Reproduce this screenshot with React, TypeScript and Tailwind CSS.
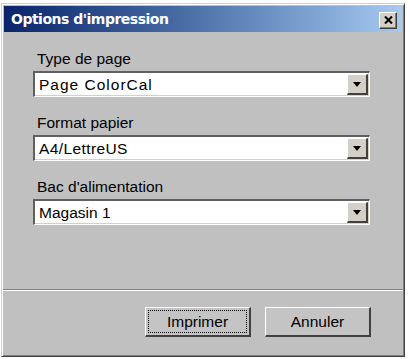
import React from "react";

const font = { fontFamily: '"Liberation Sans", Arial, sans-serif' };

function Select({ value, track }: { value: string; track: string }) {
  return (
    <div className="flex h-[26px] w-[337px] border-t-2 border-l-2 border-b border-r border-t-[#606060] border-l-[#606060] border-b-white border-r-white bg-white shadow-[inset_-1px_-1px_#d4d0c8]">
      <div className={"flex flex-1 items-center pl-[4px] text-[15.5px] text-black " + track} style={font}>
        {value}
      </div>
      <div className="m-[1px] flex w-[21px] items-center justify-center border-t border-l border-t-white border-l-white border-b-2 border-r-2 border-b-[#404040] border-r-[#404040] bg-[#d4d0c8]">
        <svg width="8" height="5" viewBox="0 0 8 5">
          <path d="M0 0h8L4 5z" fill="#000" />
        </svg>
      </div>
    </div>
  );
}

function Field({ label, value, track }: { label: string; value: string; track: string }) {
  return (
    <div className="flex flex-col">
      <div className="h-[18px] pl-[4px] text-[15.5px] leading-[18px] text-black" style={font}>
        {label}
      </div>
      <div className="mt-[3px]">
        <Select value={value} track={track} />
      </div>
    </div>
  );
}

function Button({ label, focused }: { label: string; focused?: boolean }) {
  return (
    <div className="flex h-[30px] w-[106px] border-t border-l border-t-white border-l-white border-b-2 border-r-2 border-b-[#404040] border-r-[#404040] bg-[#c4c4c4] p-[2px]">
      <div
        className={
          focused
            ? "flex flex-1 items-center justify-center border border-dotted border-black text-[15.5px] text-black"
            : "flex flex-1 items-center justify-center text-[15.5px] text-black"
        }
        style={font}
      >
        {label}
      </div>
    </div>
  );
}

export default function App() {
  return (
    <div className="h-[359px] w-[410px] bg-white pl-[1px] pt-[3px]">
      <div className="flex h-[354px] w-[404px] flex-col border border-[#d4d0c8] border-b-[#404040] border-r-[#404040] bg-[#c0c0c0] shadow-[inset_1px_1px_#ffffff,inset_-1px_-1px_#808080]">
        <div className="mx-[2px] mt-[2px] flex h-[26px] items-center justify-between bg-linear-to-r from-[#0a246a] to-[#a6caf0] pl-[7px] pr-[5px]">
          <span
            className="text-[14px] font-bold tracking-[-0.5px] text-white"
            style={{ fontFamily: '"DejaVu Sans", Verdana, sans-serif' }}
          >
            Options d'impression
          </span>
          <div className="mt-[2px] flex h-[17px] w-[18px] items-center justify-center border-t border-l border-t-white border-l-white border-b border-r border-b-[#404040] border-r-[#404040] bg-[#d4d0c8] shadow-[inset_-1px_-1px_#808080]">
            <svg width="9" height="8" viewBox="0 0 9 8">
              <path d="M1 0.5L8 7.5M8 0.5L1 7.5" stroke="#000" strokeWidth="2" />
            </svg>
          </div>
        </div>
        <div className="flex flex-col gap-[17px] pl-[31px] pt-[18px]">
          <Field label="Type de page" value="Page ColorCal" track="tracking-[1px]" />
          <Field label="Format papier" value="A4/LettreUS" track="tracking-[0.4px]" />
          <Field label="Bac d'alimentation" value="Magasin 1" track="tracking-normal" />
        </div>
        <div className="mt-[64px] mx-[1px] h-[2px] border-t border-t-[#808080] border-b border-b-white" />
        <div className="mt-[16px] flex gap-[14px] pl-[143px]">
          <Button label="Imprimer" focused />
          <Button label="Annuler" />
        </div>
      </div>
    </div>
  );
}
